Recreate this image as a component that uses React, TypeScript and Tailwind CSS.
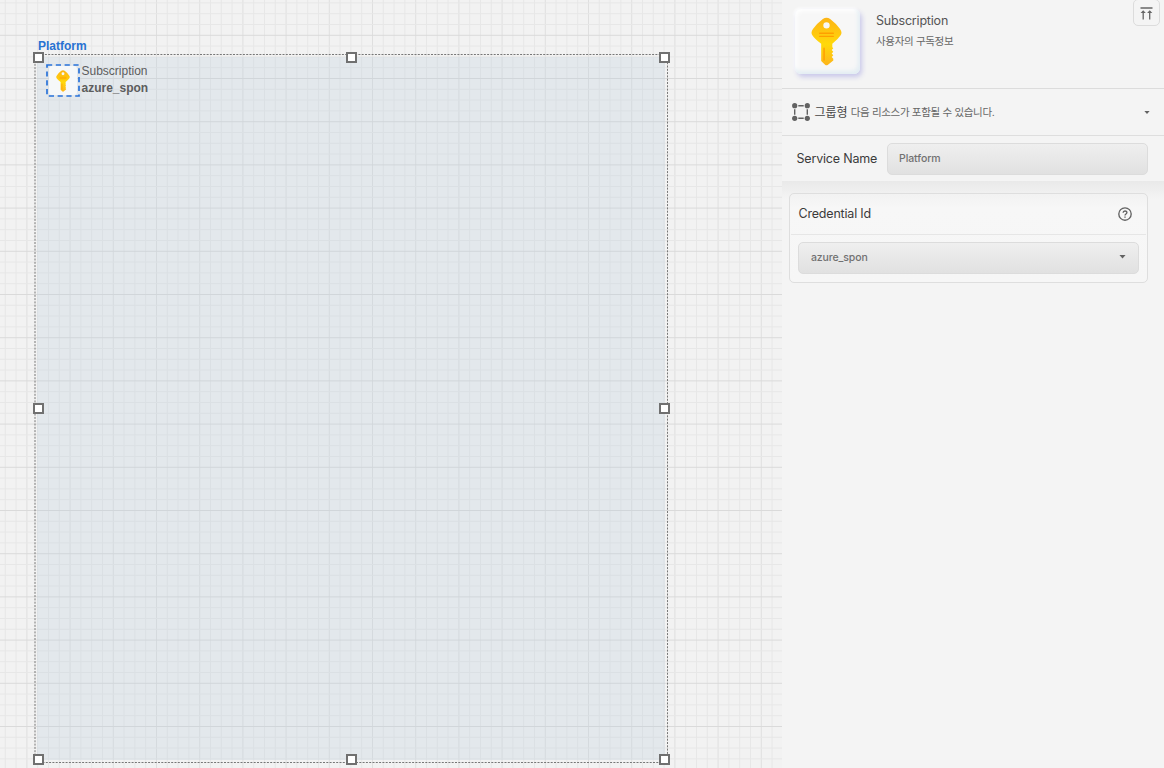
import React from 'react';

const STEP = 10.8;
const GRID_X = 26.9;
const GRID_Y = 35.3;

function GridLines() {
  const vertical = Array.from({ length: 76 }, (_, i) => i - 2);
  const horizontal = Array.from({ length: 75 }, (_, i) => i - 3);
  return (
    <svg className="absolute inset-0 h-full w-full" aria-hidden="true">
      {vertical.map((i) => (
        <line key={`v${i}`} x1={GRID_X + i * STEP} x2={GRID_X + i * STEP} y1="0" y2="768" stroke={i % 4 === 0 ? '#dfdfdf' : '#e7e7e7'} />
      ))}
      {horizontal.map((i) => (
        <line key={`h${i}`} y1={GRID_Y + i * STEP} y2={GRID_Y + i * STEP} x1="0" x2="782" stroke={i % 4 === 0 ? '#dadada' : '#e7e7e7'} />
      ))}
    </svg>
  );
}

function KeyIcon({ className }: { className?: string }) {
  return (
    <svg viewBox="0 0 32 50" className={className} aria-hidden="true">
      <defs>
        <linearGradient id="keyBody" x1="0" y1="0" x2="0" y2="1">
          <stop offset="0" stopColor="#fdb515" />
          <stop offset="0.35" stopColor="#ffc90f" />
          <stop offset="0.55" stopColor="#ffd90a" />
          <stop offset="1" stopColor="#fdb51c" />
        </linearGradient>
      </defs>
      <path
        fill="url(#keyBody)"
        fillRule="evenodd"
        d="M12.2 1.8Q16 -.6 19.8 1.8Q25.5 6 30 12.2Q32.6 15.8 30.6 18.6Q28 22.6 22 27.4V31L23 32L21.4 33.8L23 35.6L21.4 37.4L23 39.2L21.4 41L23 42.8V44.7L17.2 49.2Q16 50 14.8 49.2L10.5 45V27.4Q4 22.6 1.4 18.6Q-.6 15.8 2 12.2Q6.5 6 12.2 1.8ZM16 5A3.3 3.3 0 1 0 16 11.6A3.3 3.3 0 1 0 16 5Z"
      />
      <path stroke="#ff9f00" strokeWidth="1.5" strokeLinecap="round" d="M9 16.5H23M9 19.7H23M13.5 32V44" />
    </svg>
  );
}

function Handle({ className }: { className: string }) {
  return <span className={`absolute h-[11px] w-[11px] border-2 border-[#707070] bg-white ${className}`} />;
}

function Canvas() {
  return (
    <main className="relative h-full w-[782px] shrink-0 overflow-hidden bg-[#f2f2f2] font-['Liberation_Sans',sans-serif] text-[12px] leading-[14px]">
      <GridLines />
      <div className="absolute left-[37px] top-[57px] h-[703px] w-[628px] bg-[#b6cbdd]/25" />
      <svg className="absolute inset-0 h-full w-full" aria-hidden="true">
        <rect x="35" y="54.5" width="632.5" height="708" fill="none" stroke="#777" strokeDasharray="2 1.3" />
      </svg>
      <div className="absolute left-[38px] top-[39px] font-bold text-[#2872d2]">Platform</div>
      <div className="absolute left-[46px] top-[64px] flex h-[33px] w-[34px] items-center justify-center">
        <div className="flex h-[29px] w-[28px] items-center justify-center rounded-[3px] bg-[#f6f8f9] pr-px">
          <KeyIcon className="h-[22px] w-[14px]" />
        </div>
        <svg className="absolute inset-0 h-full w-full" aria-hidden="true">
          <rect x="1" y="1" width="32" height="31" fill="none" stroke="#2872d9" strokeWidth="1.7" strokeDasharray="5.2 3.6" />
        </svg>
      </div>
      <div className="absolute left-[81.5px] top-[63px] leading-[17px] text-[#5d5d5d]">
        <div>Subscription</div>
        <div className="font-bold">azure_spon</div>
      </div>
      <Handle className="left-[32.5px] top-[52px]" />
      <Handle className="left-[345.5px] top-[52px]" />
      <Handle className="left-[659px] top-[52px]" />
      <Handle className="left-[32.5px] top-[403px]" />
      <Handle className="left-[659px] top-[403px]" />
      <Handle className="left-[32.5px] top-[754px]" />
      <Handle className="left-[345.5px] top-[754px]" />
      <Handle className="left-[659px] top-[754px]" />
    </main>
  );
}

function Caret({ className }: { className?: string }) {
  return (
    <svg viewBox="0 0 8 4" className={className} aria-hidden="true">
      <path d="M.5 0h7L4 4Z" fill="#626262" />
    </svg>
  );
}

function GroupIcon() {
  return (
    <svg width="18" height="18" viewBox="0 0 18 18" fill="#626262" aria-hidden="true">
      <circle cx="2.7" cy="2.7" r="2.6" />
      <circle cx="15.3" cy="2.7" r="2.6" />
      <circle cx="2.7" cy="15.3" r="2.6" />
      <circle cx="15.3" cy="15.3" r="2.6" />
      <path stroke="#626262" strokeWidth="1.4" d="M6.3 2.7h5.4M6.3 15.3h5.4M2.7 6.3v5.4M15.3 6.3v5.4" />
    </svg>
  );
}

function PanelHeader() {
  return (
    <header className="relative flex h-[89px] shrink-0 border-b border-[#dcdcdc] pl-[13px] pt-[9px]">
      <div className="flex h-[65px] w-[65px] items-center justify-center rounded-[6px] bg-[#f7f7f7] pb-px pr-[3px] shadow-[2px_3px_5px_#c9c8ea,-1px_-1px_3px_#ffffff,inset_-2px_-3px_4px_#e2edf3,inset_2px_2px_4px_#ffffff]">
        <KeyIcon className="h-[49px] w-[31px]" />
      </div>
      <div className="ml-[16px] pt-[3px]">
        <div className="text-[12.5px] leading-[18px] tracking-[-0.19px] text-[#555]">Subscription</div>
        <div className="mt-[4px] text-[10.5px] leading-[16px] tracking-[-0.33px] text-[#666]">사용자의 구독정보</div>
      </div>
      <button className="absolute -top-px right-[4px] flex h-[27px] w-[27px] items-center justify-center rounded-[5px] border border-[#dcdcdc] pt-px" aria-label="Collapse">
        <svg width="13" height="13" viewBox="0 0 13 13" fill="none" stroke="#666" aria-hidden="true">
          <path strokeWidth="1.3" d="M.5 1H12.5M3.2 12.5V4.5M9.7 12.5V4.5" />
          <path fill="#666" stroke="none" d="M.6 6L3.2 3.2L5.8 6ZM7.1 6L9.7 3.2L12.3 6Z" />
        </svg>
      </button>
    </header>
  );
}

function Panel() {
  return (
    <aside className="flex h-full w-[382px] flex-col bg-[#f4f4f4] font-['Inter','Noto_Sans_CJK_KR',sans-serif]">
      <PanelHeader />
      <section className="flex h-[47px] shrink-0 items-center border-b border-[#dedede] pl-[9.5px] pr-[14px]">
        <GroupIcon />
        <span className="ml-[5px] pt-px text-[12px] text-[#444]">그룹형</span>
        <span className="ml-[3px] pt-[2px] text-[10.5px] tracking-[-0.33px] text-[#666]">다음 리소스가 포함될 수 있습니다.</span>
        <Caret className="ml-auto h-[3px] w-[6px]" />
      </section>
      <section className="flex h-[45px] shrink-0 items-center pl-[14px] pr-[16px]">
        <label className="w-[91px] pl-[0.5px] pt-[2px] text-[12.5px] tracking-[-0.19px] text-[#3b3b3b]">Service Name</label>
        <div className="flex h-[32px] flex-1 items-center rounded-[5px] border border-[#dcdcdc] bg-gradient-to-b from-[#efefef] to-[#e1e1e1] px-[11px] text-[10.5px] font-medium tracking-[-0.08px] text-[#717171]">
          Platform
        </div>
      </section>
      <section className="flex-1 bg-[linear-gradient(to_bottom,#e9e9e9_0px,#f4f4f4_18px)] pl-[7px] pr-[16px] pt-[12px]">
        <div className="h-[90px] rounded-[5px] border border-[#dedede] bg-[linear-gradient(to_bottom,#f2f2f2_0px,#f7f7f7_14px,#f6f6f6_100%)]">
          <div className="mx-px flex h-[41px] items-center justify-between border-b border-[#e6e6e6] pl-[7.5px] pr-[14px]">
            <span className="text-[12.5px] tracking-[-0.19px] text-[#3b3b3b]">Credential Id</span>
            <svg width="14" height="14" viewBox="0 0 14 14" fill="none" stroke="#626262" strokeWidth="1.35" aria-label="Help">
              <circle cx="7" cy="7" r="6.2" />
              <path d="M5.1 5.8C5.1 3.4 8.9 3.4 8.9 5.6C8.9 7 7 7 7 8.4M7 9.4V10.8" />
            </svg>
          </div>
          <div className="mx-[8px] mt-[7px] flex h-[32px] items-center justify-between rounded-[5px] border border-[#dcdcdc] bg-gradient-to-b from-[#efefef] to-[#e1e1e1] pl-[12px] pr-[12px] text-[10.5px] font-medium tracking-[-0.12px] text-[#717171]">
            azure_spon
            <Caret className="mb-[2px] h-[3.5px] w-[7px]" />
          </div>
        </div>
      </section>
    </aside>
  );
}

export default function App() {
  return (
    <div className="flex h-[768px] w-[1164px] overflow-hidden bg-[#f4f4f4]">
      <Canvas />
      <Panel />
    </div>
  );
}
